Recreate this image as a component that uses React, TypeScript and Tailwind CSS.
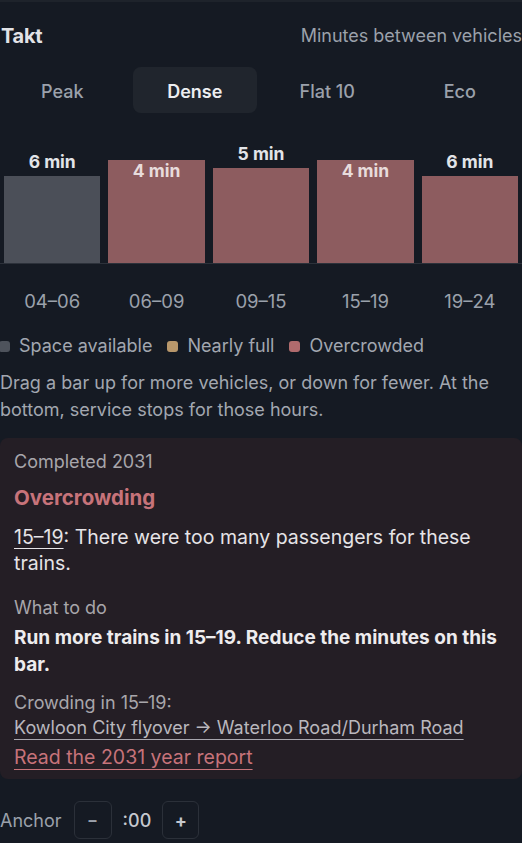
import React from "react";

const tabs = ["Peak", "Dense", "Flat 10", "Eco"];

const bars = [
  { hours: "04–06", label: "6 min", h: 87, color: "bg-[#4b4f58]", inside: false },
  { hours: "06–09", label: "4 min", h: 103, color: "bg-[#8d5c5f]", inside: true },
  { hours: "09–15", label: "5 min", h: 95, color: "bg-[#8d5c5f]", inside: false },
  { hours: "15–19", label: "4 min", h: 103, color: "bg-[#8d5c5f]", inside: true },
  { hours: "19–24", label: "6 min", h: 87, color: "bg-[#8d5c5f]", inside: false },
];

const legend = [
  { name: "Space available", color: "bg-[#4e535c]" },
  { name: "Nearly full", color: "bg-[#b8976b]" },
  { name: "Overcrowded", color: "bg-[#b06b6d]" },
];

const App = () => {
  return (
    <div
      className="w-[522px] h-[843px] overflow-hidden bg-[#151a23] border-t-2 border-[#1e232b] text-[#e4e4e7]"
      style={{ fontFamily: "Inter, 'Noto Sans', sans-serif" }}
    >
      <div className="flex items-center justify-between pt-[22px] pl-[1px]">
        <h1 className="text-[20px] leading-6 font-bold text-[#e2e3e7] tracking-[-0.3px]">Takt</h1>
        <span className="text-[18px] leading-6 text-[#9ba1ab] whitespace-nowrap">Minutes between vehicles</span>
      </div>

      <div className="grid grid-cols-4 gap-2 mt-[19px]">
        {tabs.map((t) => (
          <button
            key={t}
            className={
              t === "Dense"
                ? "h-[46px] rounded-lg bg-[#20252d] text-[18px] font-semibold text-[#eceef1] pt-[2px]"
                : "h-[46px] rounded-lg text-[18px] font-medium text-[#9ba1ab] pt-[2px]"
            }
          >
            {t}
          </button>
        ))}
      </div>

      <div className="mt-[32px] h-[118px] flex items-end gap-2 px-1">
        {bars.map((b) => (
          <div key={b.hours} className="flex-1 flex flex-col items-center justify-end">
            {!b.inside && (
              <span className="text-[17.5px] leading-5 font-bold text-[#e2e4e8] mb-[4px]">{b.label}</span>
            )}
            <div className={`w-full ${b.color} flex justify-center`} style={{ height: b.h }}>
              {b.inside && (
                <span className="text-[17.5px] leading-5 font-bold text-[#e8dcdc] mt-[1px]">{b.label}</span>
              )}
            </div>
          </div>
        ))}
      </div>
      <div className="h-px bg-[#2c313a]" />

      <div className="flex gap-2 px-1 mt-[25px]">
        {bars.map((b) => (
          <span key={b.hours} className="flex-1 text-center text-[18.5px] leading-6 text-[#9ba1ab]">
            {b.hours}
          </span>
        ))}
      </div>

      <div className="flex items-center gap-[15px] mt-[21px] -ml-[1px]">
        {legend.map((l) => (
          <div key={l.name} className="flex items-center gap-[9px]">
            <span className={`w-[11px] h-[11px] rounded-[3px] ${l.color}`} />
            <span className="text-[18px] leading-6 text-[#a2a7b0]">{l.name}</span>
          </div>
        ))}
      </div>

      <p className="mt-[11px] text-[18px] leading-[27px] text-[#a2a7b0]">
        Drag a bar up for more vehicles, or down for fewer. At the bottom, service stops for those hours.
      </p>

      <div className="mt-[15px] rounded-lg bg-[#241e25] px-[14px] pt-[12px] pb-[8px]">
        <div className="text-[18px] leading-6 text-[#a8a6ab]">Completed 2031</div>
        <div className="mt-[10px] text-[20.5px] leading-7 font-bold text-[#c7737a]">Overcrowding</div>
        <p className="mt-[12px] text-[19.5px] leading-[26px] text-[#e6e4e7]">
          <span className="underline underline-offset-[4px] decoration-1">15–19</span>: There were too many
          passengers for these trains.
        </p>
        <div className="mt-[20px] text-[18px] leading-6 text-[#a8a6ab]">What to do</div>
        <p className="mt-[4px] text-[19px] leading-[27px] font-bold text-[#eeecee]">
          Run more trains in 15–19. Reduce the minutes on this bar.
        </p>
        <div className="mt-[13px] text-[18px] leading-6 text-[#a8a6ab]">Crowding in 15–19:</div>
        <div className="text-[18px] leading-[25px]">
          <a className="text-[#b9b7bd] underline underline-offset-[5px] decoration-1 decoration-[#a8a6ae]">
            Kowloon City flyover → Waterloo Road/Durham Road
          </a>
        </div>
        <div className="mt-[3px] text-[19.5px] leading-[28px]">
          <a className="text-[#c7737a] underline underline-offset-[5px] decoration-1">Read the 2031 year report</a>
        </div>
      </div>

      <div className="mt-[22px] flex items-center">
        <span className="text-[18px] text-[#9ba1ab] mr-[12px]">Anchor</span>
        <button className="w-[38px] h-[38px] rounded-md border border-[#2b3039] text-[16px] font-bold text-[#9ba1ab]">
          –
        </button>
        <span className="mx-[11px] text-[18px] font-medium text-[#c5c8ce]">:00</span>
        <button className="w-[37px] h-[38px] rounded-md border border-[#2b3039] text-[18px] font-bold text-[#c5c8ce]">
          +
        </button>
      </div>
    </div>
  );
};

export default App;
